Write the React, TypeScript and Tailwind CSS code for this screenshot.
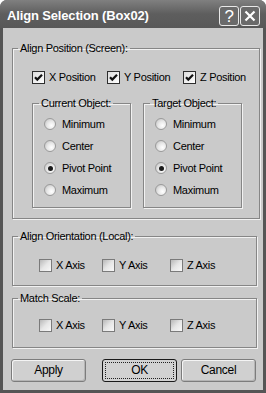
import React from "react";

const font = { fontFamily: '"Liberation Sans", Arial, sans-serif' };

function CheckBox({ checked }: { checked?: boolean }) {
  return (
    <span
      className={
        "inline-flex w-[13px] h-[13px] shrink-0 items-center justify-center border " +
        (checked
          ? "border-[#2e2e2e] bg-gradient-to-br from-[#dcdcdc] to-[#ffffff]"
          : "border-[#7a7a7a] bg-gradient-to-br from-[#b8b8b8] via-[#e6e6e6] to-[#f8f8f8]")
      }
    >
      {checked && (
        <svg width="11" height="11" viewBox="0 0 11 11">
          <polyline
            points="2,5.2 4.3,7.6 9,2.8"
            fill="none"
            stroke="#111"
            strokeWidth="2.2"
          />
        </svg>
      )}
    </span>
  );
}

function Radio({ checked }: { checked?: boolean }) {
  return (
    <span className="inline-flex w-[12px] h-[12px] shrink-0 items-center justify-center rounded-full border border-[#9a9a9a] bg-[radial-gradient(circle_at_65%_65%,#ffffff_0%,#e8e8e8_45%,#bcbcbc_100%)]">
      {checked && (
        <span className="w-[5px] h-[5px] rounded-full bg-[#1a1a1a]" />
      )}
    </span>
  );
}

function CheckItem({ label, checked }: { label: string; checked?: boolean }) {
  return (
    <div className="flex items-center gap-[4px] h-[13px] whitespace-nowrap">
      <CheckBox checked={checked} />
      <span className="leading-[13px]">{label}</span>
    </div>
  );
}

function RadioGroup({ title }: { title: string }) {
  const items = ["Minimum", "Center", "Pivot Point", "Maximum"];
  return (
    <fieldset className="w-[99px] border border-[#868686] shadow-[1px_1px_0_#f2f2f2,inset_1px_1px_0_#f2f2f2]">
      <legend className="ml-[6px] px-[2px] leading-[13px] whitespace-nowrap">{title}</legend>
      <div className="pl-[11px] pt-[3px] pb-[6px] flex flex-col">
        {items.map((it) => (
          <div key={it} className="flex items-center gap-[6px] h-[22px] whitespace-nowrap">
            <Radio checked={it === "Pivot Point"} />
            <span className="leading-[13px]">{it}</span>
          </div>
        ))}
      </div>
    </fieldset>
  );
}

function AxisGroup({
  title,
  pt,
  pb,
}: {
  title: string;
  pt: string;
  pb: string;
}) {
  return (
    <fieldset className="border border-[#868686] shadow-[1px_1px_0_#f2f2f2,inset_1px_1px_0_#f2f2f2]">
      <legend className="ml-[5px] px-[2px] leading-[13px] whitespace-nowrap">{title}</legend>
      <div className={"grid grid-cols-[63px_68px_auto] pl-[26px] " + pt + " " + pb}>
        <CheckItem label="X Axis" />
        <CheckItem label="Y Axis" />
        <CheckItem label="Z Axis" />
      </div>
    </fieldset>
  );
}

function Button({ label, def }: { label: string; def?: boolean }) {
  return (
    <button
      className={
        "w-[75px] h-[23px] rounded-[3px] border flex items-center justify-center leading-[13px] text-[12px] " +
        (def
          ? "border-[#1a1a1a] bg-[#d2d2d2]"
          : "border-[#7c7c7c] bg-[#d0d0d0] shadow-[inset_1px_1px_0_#f4f4f4,inset_-1px_-1px_0_#b4b4b4]")
      }
    >
      {def ? (
        <span className="w-[69px] h-[17px] border border-dotted border-[#222] flex items-center justify-center">
          {label}
        </span>
      ) : (
        label
      )}
    </button>
  );
}

export default function App() {
  return (
    <div
      className="w-[266px] h-[393px] bg-[#555555] rounded-t-[7px] flex flex-col text-[11px] tracking-[-0.3px] text-black"
      style={font}
    >
      {/* title bar */}
      <div className="h-[28px] shrink-0 flex items-center pl-[7px] pr-[6px] rounded-t-[7px] bg-gradient-to-b from-[#808080] via-[#5e5e5e] to-[#585858]">
        <span className="flex-1 pt-[4px] text-white font-bold text-[13px] tracking-[-0.15px] leading-[16px] whitespace-nowrap">
          Align Selection (Box02)
        </span>
        <div className="flex gap-[1px] pt-[4px]">
          <div className="w-[20px] h-[20px] rounded-[3px] border border-[#e8e8e8] bg-[#6a6a6a] flex items-center justify-center text-white text-[17px] leading-none">
            ?
          </div>
          <div className="w-[20px] h-[20px] rounded-[3px] border border-[#e8e8e8] bg-[#6a6a6a] flex items-center justify-center">
            <svg width="12" height="12" viewBox="0 0 12 12">
              <path d="M1.5 1.5 L10.5 10.5 M10.5 1.5 L1.5 10.5" stroke="#fff" strokeWidth="2.2" />
            </svg>
          </div>
        </div>
      </div>

      {/* body */}
      <div className="mx-[3px] mb-[3px] flex-1 bg-[#cacaca] flex flex-col pl-[9px] pr-[6px] pt-[14px]">
        <fieldset className="border border-[#868686] shadow-[1px_1px_0_#f2f2f2,inset_1px_1px_0_#f2f2f2]">
          <legend className="ml-[5px] px-[2px] leading-[13px] whitespace-nowrap">Align Position (Screen):</legend>
          <div className="pl-[19px] pr-[13px] pt-[16px] pb-[10px] flex flex-col">
            <div className="grid grid-cols-[75px_76px_auto]">
              <CheckItem label="X Position" checked />
              <CheckItem label="Y Position" checked />
              <CheckItem label="Z Position" checked />
            </div>
            <div className="mt-[13px] flex gap-[12px]">
              <RadioGroup title="Current Object:" />
              <RadioGroup title="Target Object:" />
            </div>
          </div>
        </fieldset>

        <div className="mt-[11px]">
          <AxisGroup title="Align Orientation (Local):" pt="pt-[16px]" pb="pb-[13px]" />
        </div>
        <div className="mt-[6px]">
          <AxisGroup title="Match Scale:" pt="pt-[14px]" pb="pb-[15px]" />
        </div>

        <div className="mt-[11px] -ml-[1px] flex">
          <Button label="Apply" />
          <div className="ml-[16px]">
            <Button label="OK" def />
          </div>
          <div className="ml-[4px]">
            <Button label="Cancel" />
          </div>
        </div>
      </div>
    </div>
  );
}
